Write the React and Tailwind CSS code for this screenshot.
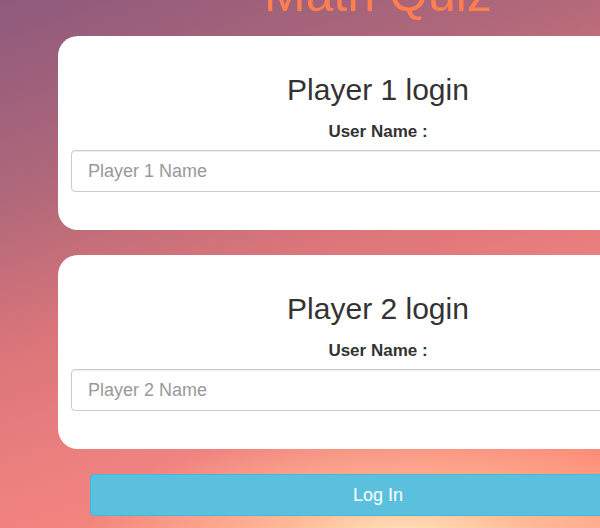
import React from 'react'

const players = [1, 2]

function PlayerCard({ n }) {
  return (
    <div className="bg-white rounded-[20px] pt-[36px] pb-[38px] px-[13px] flex flex-col">
      <h3 className="h-[36px] leading-[36px] text-[30px] text-center text-[#333]">Player {n} login</h3>
      <label className="mt-[14px] h-[20px] leading-[20px] text-[17px] font-bold text-center text-[#333]">User Name :</label>
      <input
        type="text"
        placeholder={`Player ${n} Name`}
        className="mt-[8px] h-[42px] w-full rounded-[4px] border border-[#ccc] px-[16px] text-[18px] text-[#555] placeholder:text-[#999] shadow-[inset_0_1px_1px_rgba(0,0,0,0.075)] outline-none"
      />
    </div>
  )
}

export default function App() {
  return (
    <div className="w-full h-[528px] overflow-hidden font-['Liberation_Sans',Arial,sans-serif]">
      <div className="w-[756px] h-[528px] bg-[radial-gradient(ellipse_320px_120px_at_405px_545px,#fdf0c4_0%,rgba(255,200,160,0.75)_40%,rgba(255,160,130,0)_100%),linear-gradient(160deg,#8e5a7c_0%,#b0687a_25%,#dc767a_45%,#f08380_65%,#ff8c78_85%,#ffa084_100%)]">
        <div className="h-[36px] flex items-end justify-center">
          <h1 className="leading-[55px] mb-[14px] text-[50px] text-[#ff7f50] whitespace-nowrap">Math Quiz</h1>
        </div>
        <div className="mx-[58px] flex flex-col gap-[25px]">
          {players.map((n) => (
            <PlayerCard key={n} n={n} />
          ))}
          <div className="px-[32px]">
            <button className="w-full h-[42px] rounded-[4px] bg-[#5bc0de] border border-[#46b8da] text-white text-[18px]">
              Log In
            </button>
          </div>
        </div>
      </div>
    </div>
  )
}
